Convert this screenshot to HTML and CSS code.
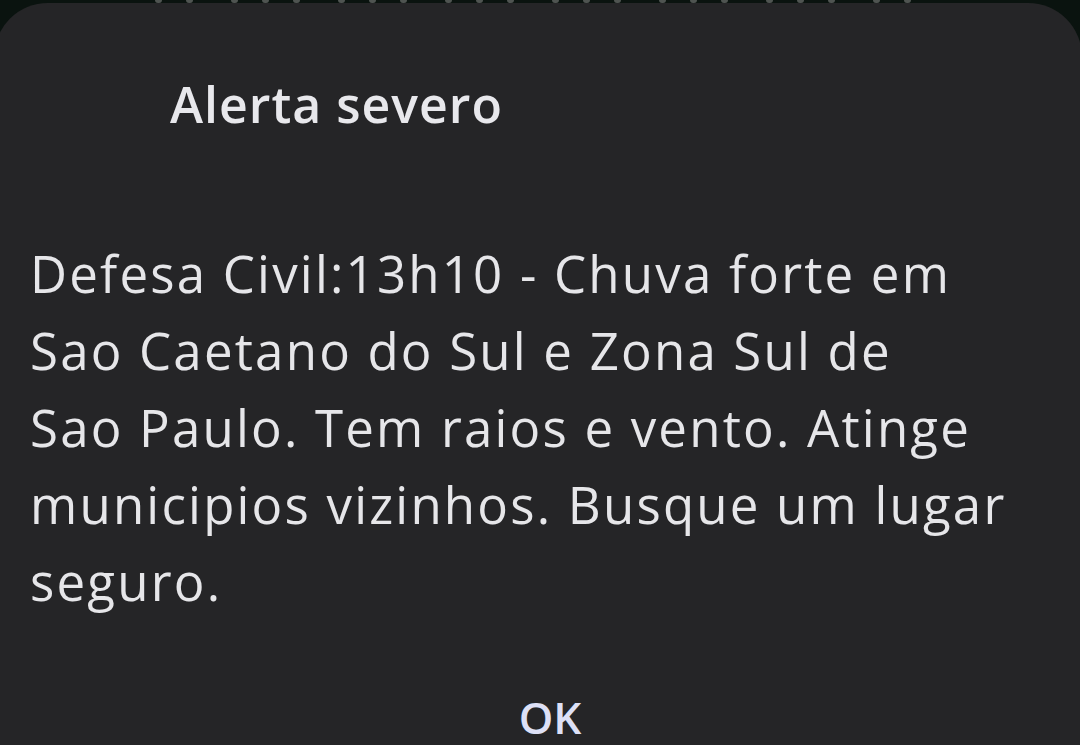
FILE: index.html
```html
<!DOCTYPE html>
<html lang="pt-BR">
<head>
  <meta charset="UTF-8" />
  <meta name="viewport" content="width=device-width, initial-scale=1.0" />
  <title>Alerta severo</title>
  <link rel="stylesheet" href="styles.css">
</head>
<body>
  <!-- content behind the dialog, only its bottom edge peeks out -->
  <div class="behind">
    <i></i><i></i><i></i><i></i><i></i><i></i><i></i><i></i><i></i><i></i>
    <i></i><i></i><i></i><i></i><i></i><i></i><i></i><i></i><i></i><i></i>
    <i></i><i></i>
  </div>

  <div class="dialog">
    <h1 class="dialog-title">Alerta severo</h1>
    <p class="dialog-text">Defesa Civil:13h10 - Chuva forte em<br>Sao Caetano do Sul e Zona Sul de<br>Sao Paulo. Tem raios e vento. Atinge<br>municipios vizinhos. Busque um lugar<br>seguro.</p>
    <div class="dialog-actions">
      <button class="ok-button">OK</button>
    </div>
  </div>
</body>
</html>
```

FILE: styles.css
```css
html, body {
  height: 100%;
}

body {
  margin: 0;
  background-color: #0a130f;
  font-family: 'Open Sans', Roboto, sans-serif;
  overflow: hidden;
}

.behind {
  height: 3px;
  display: flex;
  gap: 24px;
  padding-left: 155px;
  overflow: hidden;
}

.behind i {
  width: 7px;
  height: 3px;
  border-radius: 0 0 4px 4px;
  background-color: #4f5451;
}

.behind i:nth-child(3n) {
  margin-left: 14px;
}

.dialog {
  background-color: #252527;
  border-radius: 54px 54px 0 0;
  margin-left: -6px;
  margin-right: -2px;
  padding: 0 0 0 36px;
  height: 100%;
}

.dialog-title {
  margin: 0;
  padding: 73px 0 0 140px;
  color: #e8e8ec;
  font-size: 50px;
  font-weight: 600;
  line-height: 56px;
  letter-spacing: 1px;
}

.dialog-text {
  margin: 103px 0 0 0;
  color: #e6e6e9;
  font-size: 51px;
  font-weight: 400;
  line-height: 77px;
  letter-spacing: 2.2px;
  white-space: nowrap;
}

.dialog-actions {
  display: flex;
  justify-content: center;
  margin-top: 77px;
}

.ok-button {
  background: none;
  border: none;
  padding: 0;
  color: #dde0f6;
  font-family: inherit;
  font-size: 44px;
  font-weight: 600;
  line-height: 40px;
  margin-left: -12px;
  cursor: pointer;
}
```
